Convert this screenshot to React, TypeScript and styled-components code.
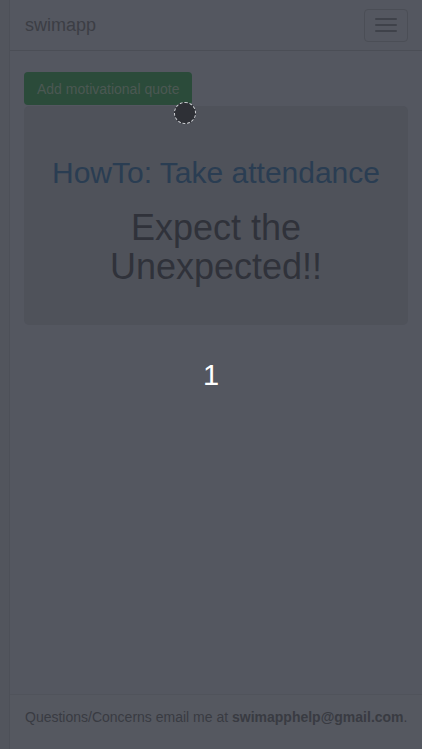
import React from "react";
import styled, { createGlobalStyle } from "styled-components";

const Global = createGlobalStyle`
  html, body { margin: 0; padding: 0; background: #52555d; }
  body { font-family: "Liberation Sans", Arial, sans-serif; }
`;

const Page = styled.div`
  position: relative;
  width: 422px;
  height: 749px;
  box-sizing: border-box;
  background: #52555d;
  padding-left: 9px;
  display: flex;
`;

const Frame = styled.div`
  flex: 1;
  display: flex;
  flex-direction: column;
  background: #545760;
  border-left: 1px solid #4d5058;
`;

const Navbar = styled.nav`
  height: 51px;
  box-sizing: border-box;
  border-bottom: 1px solid #4b4e56;
  display: flex;
  align-items: center;
  justify-content: space-between;
  padding: 0 14px 0 15px;
`;

const Brand = styled.span`
  font-size: 18px;
  color: #3c3e45;
`;

const Toggler = styled.button`
  width: 44px;
  height: 33px;
  box-sizing: border-box;
  border: 1px solid #4b4e56;
  border-radius: 4px;
  background: transparent;
  display: flex;
  flex-direction: column;
  justify-content: center;
  align-items: center;
  gap: 4px;
  padding: 0;
`;

const Bar = styled.span`
  width: 22px;
  height: 2px;
  background: #3f424a;
  border-radius: 1px;
`;

const Content = styled.main`
  flex: 1;
  padding: 21px 14px 0 14px;
  display: flex;
  flex-direction: column;
`;

const QuoteButton = styled.button`
  align-self: flex-start;
  height: 33px;
  padding: 0 13px;
  border: none;
  border-radius: 4px;
  background: #2b4b3a;
  color: #4b5853;
  font-family: "Liberation Sans", Arial, sans-serif;
  font-size: 14px;
`;

const Jumbotron = styled.section`
  margin-top: 1px;
  height: 219px;
  border-radius: 5px;
  background: #4f525a;
  display: flex;
  flex-direction: column;
  align-items: center;
  padding-top: 50px;
  box-sizing: border-box;
`;

const Title = styled.h2`
  margin: 0;
  font-weight: 400;
  font-size: 30px;
  line-height: 34px;
  color: #2a3d52;
`;

const Quote = styled.p`
  margin: 18px 0 0 0;
  font-size: 36px;
  line-height: 39px;
  color: #30323a;
  text-align: center;
  width: 260px;
`;

const StepNumber = styled.div`
  margin-top: 33px;
  text-align: center;
  font-size: 29px;
  line-height: 34px;
  color: #ffffff;
  padding-right: 10px;
`;

const Footer = styled.footer`
  height: 46px;
  margin-bottom: 9px;
  box-sizing: border-box;
  border-top: 1px solid #50535b;
  background: #555860;
  display: flex;
  align-items: center;
  padding-left: 15px;
  padding-bottom: 2px;
  font-size: 14px;
  color: #393b42;
`;

const Strong = styled.strong`
  font-weight: 700;
`;

const Hotspot = styled.div`
  position: absolute;
  left: 174px;
  top: 102px;
  width: 22px;
  height: 22px;
  box-sizing: border-box;
  border-radius: 50%;
  background: #2e3036;
  border: 1px dashed #d0d2d6;
`;

export default function App() {
  return (
    <>
      <Global />
      <Page>
        <Frame>
          <Navbar>
            <Brand>swimapp</Brand>
            <Toggler aria-label="menu">
              <Bar />
              <Bar />
              <Bar />
            </Toggler>
          </Navbar>
          <Content>
            <QuoteButton>Add motivational quote</QuoteButton>
            <Jumbotron>
              <Title>HowTo: Take attendance</Title>
              <Quote>Expect the Unexpected!!</Quote>
            </Jumbotron>
            <StepNumber>1</StepNumber>
          </Content>
          <Footer>
            <span>
              Questions/Concerns email me at <Strong>swimapphelp@gmail.com</Strong>.
            </span>
          </Footer>
        </Frame>
        <Hotspot />
      </Page>
    </>
  );
}
